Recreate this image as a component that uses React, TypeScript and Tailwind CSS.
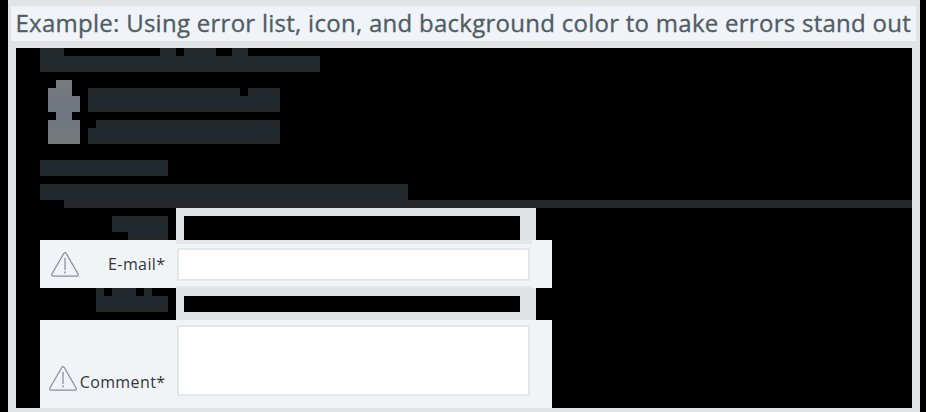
import React, { useId } from "react";

function WarningIcon({ className = "" }: { className?: string }) {
  return (
    <svg className={className} width="28" height="25" viewBox="0 0 28 25" fill="none" stroke="#878e97" strokeWidth="1.25" strokeLinejoin="round" strokeLinecap="round">
      <path d="M12.9 1.3Q14 0 15.1 1.3L27.1 22Q27.6 23.8 26.2 24H1.8Q.4 23.8.9 22Z" />
      <path d="M14 6.3V17.5" />
      <path d="M14 20V20.8" strokeWidth="1.5" />
    </svg>
  );
}

type BlocksProps = { d: string; width: number; height: number; edge?: string; middle?: string; className?: string };

function Blocks({ d, width, height, edge = "#25292a", middle = "#1e2931", className = "" }: BlocksProps) {
  const id = useId();
  return (
    <svg className={className} width={width} height={height} viewBox={`0 0 ${width} ${height}`} shapeRendering="crispEdges">
      <linearGradient id={id} x1="0" y1="0" x2="0" y2="1">
        <stop offset="0" stopColor={edge} />
        <stop offset="0.5" stopColor={middle} />
        <stop offset="1" stopColor={edge} />
      </linearGradient>
      <path d={d} fill={`url(#${id})`} />
    </svg>
  );
}

export default function App() {
  return (
    <div className="h-[412px] w-[926px] overflow-hidden bg-black pl-2 font-['Open_Sans',sans-serif]">
      <div className="flex h-full w-[912px] flex-col bg-[#e1e3e4]">
        <header className="mt-1.5 ml-[3px] flex h-[35px] w-[905px] shrink-0 items-start bg-[#f0f4f8] pl-[4.5px]">
          <h1 className="-mt-px whitespace-nowrap text-[24px] leading-[35px] font-medium tracking-[0.27px] text-[#505d65] [-webkit-text-stroke:0.35px_#505d65]">
            Example: Using error list, icon, and background color to make errors stand out
          </h1>
        </header>
        <main className="mx-2 mt-[7px] flex h-[360px] shrink-0 flex-col bg-black">
          <Blocks className="ml-6 shrink-0" middle="#1f2b2e" width={280} height={24} d="M0 0H24V8H120V0H136V8H144V0H176V8H192V0H208V8H280V24H0Z" />
          <div className="mt-2 ml-8 flex h-16 shrink-0 gap-2">
            <Blocks edge="#77797b" middle="#6e7883" width={32} height={64} d="M8 0H24V16H32V32H24V40H32V64H0V40H8V32H0V8H8Z" />
            <div className="flex flex-col gap-2 pt-2">
              <Blocks width={192} height={24} d="M0 0H152V8H160V0H192V24H0Z" />
              <Blocks width={192} height={24} d="M8 0H192V24H0V8H8Z" />
            </div>
          </div>
          <div className="mt-4 ml-6 h-4 w-32 shrink-0 bg-linear-to-b from-[#23292b] via-[#1e2a31] to-[#21292b]" />
          <div className="mt-2 ml-6 h-4 w-[368px] shrink-0 bg-linear-to-b from-[#23292a] to-[#1d2931]" />
          <div className="ml-12 h-2 shrink-0 bg-[#252728]" />
          <div className="flex h-8 shrink-0">
            <div className="w-40 pt-2 pl-24">
              <Blocks width={56} height={24} d="M0 0H56V24H16V16H0Z" />
            </div>
            <div className="w-[360px] bg-[#e1e2e4] pt-2 pr-4 pl-2">
              <div className="h-6 bg-black" />
            </div>
          </div>
          <div className="ml-6 flex h-12 w-[512px] shrink-0 bg-[#f0f4f7]">
            <div className="flex w-[136px] items-center justify-between pr-[10.5px] pl-[11px]">
              <WarningIcon />
              <label htmlFor="email" className="text-[16px] leading-6 tracking-[0.4px] text-[#30373b]">E-mail*</label>
            </div>
            <div className="w-[356px] border-t-4 border-b-2 border-[#e4e6e8]">
              <input id="email" className="mt-1 ml-px block h-[33px] w-[353px] border-2 border-[#e4e7ea] bg-white outline-none" />
            </div>
          </div>
          <div className="flex h-8 shrink-0">
            <div className="w-40 pl-20">
              <Blocks width={72} height={24} d="M0 0H8V8H16V0H40V8H48V0H56V8H72V24H0Z" />
            </div>
            <div className="w-[360px] bg-[#e1e2e4] py-2 pr-4 pl-2">
              <div className="h-4 bg-black" />
            </div>
          </div>
          <div className="ml-6 flex h-[88px] w-[512px] shrink-0 bg-[#f0f4f7]">
            <div className="flex w-[136px] items-end justify-between pr-[10.5px] pb-[14px] pl-[9px]">
              <WarningIcon className="mb-[3px] shrink-0" />
              <label htmlFor="comment" className="text-[16px] leading-6 tracking-[0.4px] text-[#30373b]">Comment*</label>
            </div>
            <textarea id="comment" className="mt-[5px] ml-px h-[71px] w-[353px] resize-none border-2 border-[#e4e7ea] bg-white outline-none" />
          </div>
        </main>
      </div>
    </div>
  );
}
